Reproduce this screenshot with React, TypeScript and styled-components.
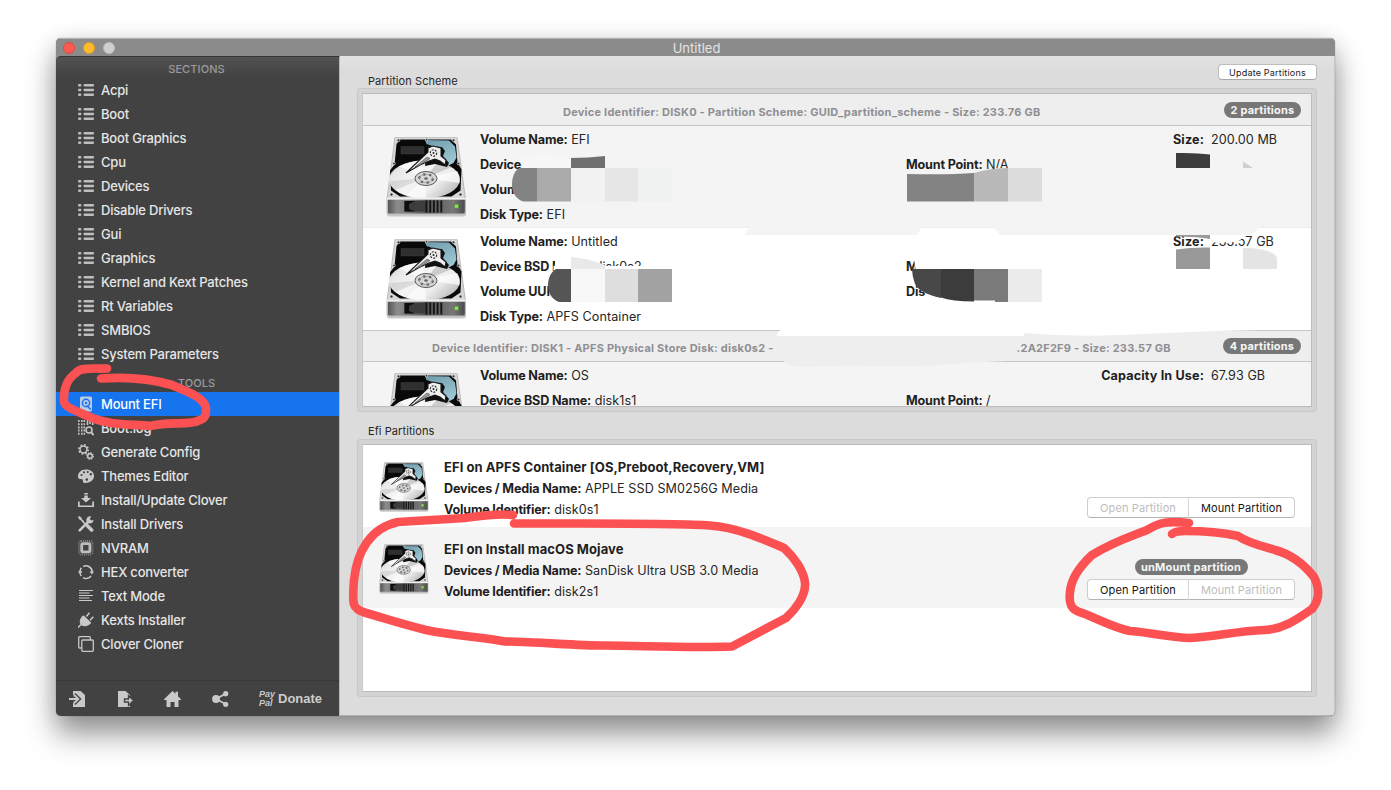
import React from "react";
import styled, { createGlobalStyle } from "styled-components";

const GlobalStyle = createGlobalStyle`
  * { box-sizing: border-box; }
  body { margin: 0; background: #fff; font-family: Inter, "Liberation Sans", sans-serif; overflow: hidden; }
  svg { display: block; }
`;

const Desktop = styled.div`
  position: relative;
  width: 1391px;
  height: 790px;
  padding: 38px 56px 0;
  background: #fff;
`;

const Window = styled.div`
  width: 1279px;
  height: 678px;
  border-radius: 5px;
  overflow: hidden;
  display: flex;
  flex-direction: column;
  background: #8b8b8b;
  box-shadow: 0 0 1px rgba(0, 0, 0, 0.5), 0 18px 30px rgba(0, 0, 0, 0.42), 0 2px 22px rgba(0, 0, 0, 0.1);
`;

const TitleBar = styled.div`
  height: 18px;
  flex: none;
  display: grid;
  grid-template-columns: 1fr auto 1fr;
  align-items: center;
  background: #8b8b8b;
  border-top: 1px solid #b4b4b4;
`;

const Lights = styled.div`
  display: flex;
  gap: 8px;
  padding-left: 7px;
`;

const Light = styled.span<{ $fill: string; $edge: string }>`
  width: 12px;
  height: 12px;
  border-radius: 50%;
  background: ${(p) => p.$fill};
  border: 1px solid ${(p) => p.$edge};
`;

const Title = styled.div`
  padding-left: 2px;
  font-size: 13px;
  line-height: 18px;
  letter-spacing: 0;
  color: #e4e4e4;
`;

const Body = styled.div`
  flex: 1;
  display: flex;
  min-height: 0;
`;

const Sidebar = styled.aside`
  width: 284px;
  flex: none;
  display: flex;
  flex-direction: column;
  background: linear-gradient(#525252, #424242 20px);
  border-top: 1px solid #343434;
  border-right: 1px solid #b9b9bd;
  border-top-left-radius: 5px;
`;

const SectionTitle = styled.div<{ $height: number; $top: number }>`
  height: ${(p) => p.$height}px;
  padding-top: ${(p) => p.$top}px;
  padding-right: 2px;
  text-align: center;
  font-size: 11px;
  line-height: 14px;
  font-weight: 500;
  letter-spacing: 0.1px;
  color: #9b9b9b;
`;

const NavItem = styled.div<{ $active?: boolean }>`
  height: 24px;
  display: flex;
  align-items: center;
  gap: 7px;
  padding-left: 22px;
  font-size: 13px;
  line-height: 17px;
  font-weight: 500;
  letter-spacing: -0.19px;
  white-space: nowrap;
  color: ${(p) => (p.$active ? "#fff" : "#e6e6e6")};
  background: ${(p) => (p.$active ? "#1674ee" : "transparent")};
`;

const Footer = styled.div`
  margin-top: auto;
  height: 36px;
  display: flex;
  align-items: center;
  padding: 1px 0 0 13px;
  border-top: 1px solid #383838;
`;

const FooterCell = styled.div<{ $width: number }>`
  width: ${(p) => p.$width}px;
  flex: none;
`;

const PayPal = styled.div`
  width: 19px;
  font: italic bold 9px/9px "Liberation Sans", sans-serif;
  color: #c8c8c8;
`;

const Donate = styled.div`
  font: bold 13px/16px "Liberation Sans", sans-serif;
  color: #cdcdcd;
`;

const Main = styled.main`
  flex: 1;
  display: flex;
  flex-direction: column;
  padding: 0 18px 0 17px;
  background: linear-gradient(#e3e3e3, #dcdcdc 14px);
  border-right: 1px solid #c6c6c6;
  border-bottom: 1px solid #b2b2b2;
`;

const GroupHeader = styled.div<{ $height: number }>`
  height: ${(p) => p.$height}px;
  flex: none;
  display: flex;
  justify-content: space-between;
  align-items: flex-end;
  padding-left: 11px;
  margin-right: -1px;
`;

const GroupLabel = styled.div<{ $drop?: number }>`
  font-size: 11px;
  line-height: 15px;
  margin-bottom: ${(p) => -(p.$drop ?? 0)}px;
  letter-spacing: 0.08px;
  color: #262626;
`;

const SmallButton = styled.button`
  width: 99px;
  height: 16px;
  margin: 0 0 8px;
  padding: 0;
  border: 1px solid #bdbdbd;
  border-bottom-color: #a8a8a8;
  border-radius: 4px;
  background: #fff;
  font: 9px/13px Inter, "Liberation Sans", sans-serif;
  letter-spacing: 0.2px;
  color: #202020;
`;

const GroupBox = styled.section<{ $height: number }>`
  height: ${(p) => p.$height}px;
  flex: none;
  margin-right: -1px;
  padding: 4px;
  border: 1px solid #c8c8c8;
  border-radius: 3px;
  background: #d3d3d3;
`;

const List = styled.div`
  height: 100%;
  overflow: hidden;
  border: 1px solid #bcbcbc;
  border-left-color: #c8c8c8;
  background: #fff;
`;

const DiskHeader = styled.div<{ $first?: boolean }>`
  height: ${(p) => (p.$first ? 32 : 31)}px;
  display: grid;
  grid-template-columns: 1fr ${(p) => (p.$first ? 87 : 88)}px;
  background: #eee;
  border-bottom: 1px solid #c6c6c6;
`;

const DiskTitle = styled.div<{ $left: number; $top: number }>`
  padding: ${(p) => p.$top}px 0 0 ${(p) => p.$left}px;
  display: flex;
  font-size: 11px;
  line-height: 15px;
  font-weight: 700;
  letter-spacing: 0.23px;
  white-space: pre;
  color: #8f8f93;
`;

const Elided = styled.span<{ $width: number }>`
  width: ${(p) => p.$width}px;
`;

const Badge = styled.div<{ $width: number; $top?: number }>`
  width: ${(p) => p.$width}px;
  height: 16px;
  margin-top: ${(p) => p.$top ?? 0}px;
  border-radius: 8px;
  background: #777;
  color: #f6f6f6;
  text-align: center;
  font-size: 11px;
  line-height: 16px;
  font-weight: 700;
  letter-spacing: 0.2px;
  white-space: nowrap;
`;

const Volume = styled.div<{ $tint?: boolean; $rule: string; $height?: number }>`
  height: ${(p) => p.$height ?? 102}px;
  display: grid;
  grid-template-columns: 117px 426px 194px 104px 1fr;
  background: ${(p) => (p.$tint ? "#f4f4f4" : "#fff")};
  border-bottom: 1px solid ${(p) => p.$rule};
`;

const DiskSlot = styled.div<{ $left: number; $top: number }>`
  padding: ${(p) => p.$top}px 0 0 ${(p) => p.$left}px;
`;

const Line = styled.div<{ $height?: number; $heading?: boolean }>`
  font-size: ${(p) => (p.$heading ? 13 : 12.6)}px;
  line-height: ${(p) => p.$height ?? 25}px;
  height: ${(p) => p.$height ?? 25}px;
  letter-spacing: 0.06px;
  white-space: pre;
  color: #262626;

  b {
    font-weight: 700;
    letter-spacing: ${(p) => (p.$heading ? 0.06 : -0.18)}px;
    color: #1f1f1f;
  }
`;

const Lines = styled.div<{ $skip?: number; $right?: boolean; $gap?: number }>`
  padding-top: ${(p) => 1 + 25 * (p.$skip ?? 0)}px;
  padding-left: ${(p) => p.$gap ?? 0}px;
  text-align: ${(p) => (p.$right ? "right" : "left")};
  ${(p) => p.$right && "b { letter-spacing: 0.14px !important; }"}
`;

const EfiRow = styled.div<{ $tint?: boolean }>`
  height: ${(p) => (p.$tint ? 81 : 82)}px;
  display: grid;
  grid-template-columns: 81px 1fr 208px;
  padding-right: 16px;
  background: ${(p) => (p.$tint ? "#f4f4f4" : "#fff")};
`;

const EfiInfo = styled.div`
  padding-top: 12px;
`;

const Actions = styled.div`
  display: flex;
  flex-direction: column;
  align-items: center;
  justify-content: flex-end;
  gap: 4px;
  height: 73px;
`;

const Segmented = styled.div`
  width: 208px;
  height: 21px;
  display: grid;
  grid-template-columns: 100px 1fr;
  border: 1px solid #cdcdcd;
  border-bottom-color: #b4b4b4;
  border-radius: 4px;
  background: #fff;
`;

const Segment = styled.div<{ $disabled?: boolean }>`
  text-align: center;
  font-size: 11px;
  line-height: 20px;
  letter-spacing: 0.12px;
  color: ${(p) => (p.$disabled ? "#bdbdbd" : "#141414")};
  & + & { border-left: 1px solid #d6d6d6; }
`;

const Overlay = styled.svg`
  position: absolute;
  inset: 0;
  pointer-events: none;
`;

const C = "#c9c9c9";

const ListIcon = () => (
  <svg width="16" height="12" viewBox="0 0 16 12" fill="#bebebe">
    {[0, 4.7, 9.4].map((y) => (
      <g key={y}>
        <rect x="0" y={y} width="3.4" height="2.5" rx="1.1" />
        <rect x="5.6" y={y} width="10.4" height="2.5" rx="0.8" />
      </g>
    ))}
  </svg>
);

const toolIcons: Record<string, React.ReactNode> = {
  mount: (
    <>
      <rect x="2" y="0.6" width="12" height="15" rx="1.6" fill="#bccbe2" />
      <circle cx="8" cy="7" r="4.4" fill="#1674ee" />
      <circle cx="8" cy="7" r="2.9" fill="#bccbe2" />
      <circle cx="8" cy="7" r="1.2" fill="#1674ee" />
      <path d="M8.8 9.4l4 4.2" stroke="#1674ee" strokeWidth="1.5" />
    </>
  ),
  log: (
    <>
      <g stroke={C} strokeWidth="1.5">
        <path d="M.8 0v15.5M3.8 0v15.5M6.3 0v15.5" strokeDasharray="2 1.2" />
        <path d="M9.5 0v5M12 0v4M14.7 0v5" />
      </g>
      <circle cx="11" cy="10" r="3" fill="none" stroke={C} strokeWidth="1.5" />
      <path d="M13.2 12.3l2.5 2.8" stroke={C} strokeWidth="1.8" />
    </>
  ),
  gears: (
    <g fill="none" stroke={C}>
      <circle cx="5.5" cy="5.4" r="3.5" strokeWidth="1.5" />
      <circle cx="5.5" cy="5.4" r="4.7" strokeWidth="1.5" strokeDasharray="1.7 1.99" />
      <circle cx="12" cy="12" r="2.3" strokeWidth="1.4" />
      <circle cx="12" cy="12" r="3.3" strokeWidth="1.2" strokeDasharray="1.3 1.29" />
    </g>
  ),
  palette: (
    <>
      <path
        d="M8 1.6C3.4 1.6 0 4.500 0 8.200c0 2 1 3 2.600 2.900 1.800-.2 2.600.6 2.300 2 -.2 1.200.5 1.900 2.200 1.900 5 0 8.900-3 8.900-7 0-3.700-3.500-6.400-8-6.400z"
        fill={C}
      />
      <g fill="#424242">
        <circle cx="3.500" cy="7" r="1.100" />
        <circle cx="6" cy="4.300" r="1.100" />
        <circle cx="9.700" cy="4" r="1.100" />
        <circle cx="12.800" cy="6.300" r="1.200" />
        <circle cx="8.800" cy="11.600" r="1.300" />
      </g>
    </>
  ),
  install: (
    <g fill={C}>
      <path d="M6.300 1h3.500v1.500H6.300zM6.300 3.500h3.500V6h3.300L8 10.600 3 6h3.300z" />
      <path d="M0 9.500h1.700v4h12.600v-4H16V15H0z" />
    </g>
  ),
  tools: (
    <>
      <path d="M1 1.500l4.800 4.700M9.500 10l4.600 4.300" stroke={C} strokeWidth="1.700" />
      <path d="M9.600 10l4 4" stroke={C} strokeWidth="3.600" strokeLinecap="round" />
      <path d="M5 6L9.800 10.400" stroke={C} strokeWidth="1.400" />
      <path d="M1.700 14.300L11 5" stroke={C} strokeWidth="2.600" strokeLinecap="round" />
      <path d="M13.200.6a3.600 3.600 0 1 0 2.300 3.200l-2.100.8-1.700-1.600z" fill={C} />
      <path d="M0 .9L1 0l2.400 1.500.3 1.300-1 .9-1.200-.3z" fill={C} />
    </>
  ),
  chip: (
    <>
      <rect x="1" y="1" width="13.500" height="13.500" rx="2" fill="none" stroke="#7d7d7d" strokeWidth="1.800" strokeDasharray="1.100 .9" />
      <rect x="3.700" y="3.700" width="8.200" height="8.200" rx="1" fill="none" stroke="#bdbdbd" strokeWidth="2.800" />
    </>
  ),
  cycle: (
    <>
      <g fill="none" stroke={C} strokeWidth="1.500">
        <path d="M5.200 2.500A6.200 6.200 0 0 1 14.200 8" />
        <path d="M2 7.500a6.200 6.200 0 0 0 1.300 4.500M5 13.600a6.200 6.200 0 0 0 8-1.600M2 7.800a6 6 0 0 1 1.400-4" />
      </g>
      <path d="M11.500 7.500H16l-2.200 3zM0 8.700h4.500L2.200 5.600z" fill={C} />
    </>
  ),
  text: (
    <path d="M1 2.500h14M1 5h10.500M1 7.500h14M1 10h10.500M1 12.500h13" stroke={C} strokeWidth="1.050" />
  ),
  plug: (
    <>
      <path d="M0 15.500l3-3M8.300 4.600L11.500.8M12 8.300l3.400-3.500" stroke={C} strokeWidth="1.500" fill="none" />
      <path d="M5.500 3.200l7.800 7.600c-2.300 3.300-7 4.400-10 2.400C.3 10.500 1.900 5.500 5.500 3.200z" fill={C} />
    </>
  ),
  clone: (
    <g fill="none" stroke={C} strokeWidth="1.300">
      <rect x="3.800" y="4" width="11.500" height="11.300" rx="1" />
      <path d="M3.500 12H1.700a1 1 0 0 1-1-1V1.700a1 1 0 0 1 1-1h9.600a1 1 0 0 1 1 1v2" />
    </g>
  ),
};

const ToolIcon = ({ name }: { name: string }) => (
  <svg width="16" height="16" viewBox="0 0 16 16">{toolIcons[name]}</svg>
);

const HardDisk = ({ width, height }: { width: number; height: number }) => (
  <svg width={width} height={height} viewBox="0 0 81 80" preserveAspectRatio="none">
    <defs>
      <linearGradient id="front" x1="0" x2="1">
        <stop offset="0" stopColor="#555" />
        <stop offset="0.12" stopColor="#8d8d8d" />
        <stop offset="0.5" stopColor="#555" />
        <stop offset="0.85" stopColor="#777" />
        <stop offset="1" stopColor="#4c4c4c" />
      </linearGradient>
      <linearGradient id="platter" x1="0" y1="0" x2="1" y2="0.6">
        <stop offset="0" stopColor="#8a8a8a" />
        <stop offset="0.2" stopColor="#e6e6e6" />
        <stop offset="0.5" stopColor="#f4f4f4" />
        <stop offset="0.75" stopColor="#eeeeee" />
        <stop offset="1" stopColor="#c4c4c4" />
      </linearGradient>
      <linearGradient id="glass" x1="0" y1="0" x2="0.6" y2="1">
        <stop offset="0" stopColor="#6f9aab" />
        <stop offset="1" stopColor="#9cc6d4" />
      </linearGradient>
    </defs>
    <path d="M1 75.500h79v2.500q-1 1.500-3 1.500H4q-2.500 0-3-1.500z" fill="#c9c9c9" />
    <path d="M8.500.3h63L80 62v14q0 1.500-2 1.500H2.500Q.5 77.500.5 76V62z" fill="#b9b9b9" />
    <path d="M9.300 1h61.400l8 59.500H1.700z" fill="#d6d6d6" />
    <path d="M14 2.500h51l5 5 1.500 18 4 7-1 21-9 6H14l-9-6-1-20 4.500-6L10.500 7z" fill="#090909" />
    <path d="M39 3l24 .5 6 6 1.500 11-3 5.500-6 3-7-7-5-12-9-3z" fill="url(#glass)" />
    <ellipse cx="38.500" cy="42.500" rx="35.500" ry="19" fill="url(#platter)" />
    <path d="M39 41L13 29.500Q23 24 36 23.500zM39 41L71 34q3 4 2.500 12z" fill="#fff" opacity=".7" />
    <path d="M39 41L52 25q8 1 14 5z" fill="#777" opacity=".3" />
    <path d="M39 41L9 53Q5 49 4 44z" fill="#8c8c8c" opacity=".22" />
    <path d="M39 41L20 59q10 2.500 20 2.200z" fill="#fff" opacity=".6" />
    <path d="M41 9l15 1 3 4-2 5 6 7-2 4-12-3-10 2z" fill="#101010" />
    <path d="M20 36l22-21 0-4 5-2 8 2v8l5 4-1 5-5-4-5-2-6 2-9 4z" fill="#efefef" stroke="#181818" strokeWidth="1.100" />
    <path d="M29 30l12-10 3 1.500L34 28z" fill="#999" stroke="#333" strokeWidth=".5" />
    <circle cx="47.500" cy="16" r="3.200" fill="#f1f1f1" stroke="#222" strokeWidth="1.100" strokeDasharray="2 1.200" />
    <circle cx="47.500" cy="16" r="1" fill="#222" />
    <rect x="15" y="9.500" width="23" height="7.500" fill="#2f2f2f" stroke="#444" strokeWidth=".4" />
    <ellipse cx="40" cy="41.500" rx="11" ry="7" fill="#d6d6d6" stroke="#4a4a4a" strokeWidth=".9" />
    <ellipse cx="40" cy="41.500" rx="6.800" ry="4.200" fill="none" stroke="#4f4f4f" strokeWidth="2.200" strokeDasharray="2.200 3.600" />
    <ellipse cx="40" cy="41.500" rx="6.800" ry="4.200" fill="none" stroke="#8a8a8a" strokeWidth=".6" />
    <ellipse cx="40" cy="41.500" rx="1.800" ry="1.200" fill="#666" />
    <g fill="#2c2c2c" stroke="#e2e2e2" strokeWidth=".7">
      <circle cx="12.500" cy="3.300" r="1.400" />
      <circle cx="40.500" cy="2.800" r="1.200" />
      <circle cx="67.500" cy="3.300" r="1.400" />
      <circle cx="8" cy="26.500" r="1.300" />
      <circle cx="72.500" cy="26.500" r="1.300" />
      <circle cx="5.500" cy="57.500" r="1.500" />
      <circle cx="74.500" cy="57.500" r="1.500" />
    </g>
    <path d="M1.200 60.500h78.300l.3 2.300H.9z" fill="#f0f0f0" />
    <path d="M2 62.800h76.800V75q0 1.500-2 1.500H4Q2 76.500 2 75z" fill="url(#front)" />
    <path d="M18.500 64H40v10.500H18.500z" fill="#3d3d3d" />
    <path d="M18.500 64H29l-6 3v5l6 2.500H18.500z" fill="#0e0e0e" />
    <path d="M40.500 63.500v12M44.200 63.500v12M47.900 63.500v12M51.600 63.500v12M55.300 63.500v12" stroke="#151515" strokeWidth="1.900" />
    <rect x="68.500" y="67.200" width="4" height="4" rx=".6" fill="#8fe850" stroke="#4c7f3a" strokeWidth=".6" />
  </svg>
);

const sections = [
  "Acpi", "Boot", "Boot Graphics", "Cpu", "Devices", "Disable Drivers", "Gui", "Graphics",
  "Kernel and Kext Patches", "Rt Variables", "SMBIOS", "System Parameters",
];

const tools: [string, string][] = [
  ["mount", "Mount EFI"],
  ["log", "Boot.log"],
  ["gears", "Generate Config"],
  ["palette", "Themes Editor"],
  ["install", "Install/Update Clover"],
  ["tools", "Install Drivers"],
  ["chip", "NVRAM"],
  ["cycle", "HEX converter"],
  ["text", "Text Mode"],
  ["plug", "Kexts Installer"],
  ["clone", "Clover Cloner"],
];

const Field = ({ label, value, height, heading }: { label: string; value?: string; height?: number; heading?: boolean }) => (
  <Line $height={height} $heading={heading}>
    <b>{label}</b>
    {value ? " " + value : ""}
  </Line>
);

const Redactions = () => (
  <g>
    {/* EFI volume */}
    <path d="M522 158q25-6 49 0v10h-49z" fill="#f7f7f7" />
    <path d="M514 181h60v18h-60z" fill="#f4f4f4" />
    <path d="M571 158q17 0 34-2v12h-34z" fill="#707070" />
    <path d="M519 168h18v33.500h-14c-8-3-11-10-11-17 0-7 2-13 7-16.500z" fill="#838383" />
    <path d="M537 168h34v33.500h-34z" fill="#aaa" />
    <path d="M571 168h34v33.500h-34z" fill="#f2f2f2" />
    <path d="M605 168h33v33.500h-33z" fill="#e6e6e6" />
    <path d="M638 168h34v33.500h-34z" fill="#f0f1f1" />
    <path d="M995 168h13v6h-13z" fill="#f4f4f4" />
    <path d="M907 174q40 1 67-1v28.500h-67z" fill="#838383" />
    <path d="M974 173q17-5 34-5v33.500h-34z" fill="#b9b9b9" />
    <path d="M1008 168h34v33.500h-34z" fill="#dcdcdc" />
    <path d="M1176 153q20-.5 34 1.500v13.500h-34z" fill="#3c3c3c" />
    <path d="M1243 161.500l10 6.500h-10z" fill="#cfcfcf" />
    {/* APFS container volume */}
    <path d="M750 226.500h172l-5 8.500H744zM993 226.500h267l-8 8.500H1000z" fill="#f4f4f4" />
    <path d="M555 258h43v11h-43zM598 266h76v3h-76z" fill="#fff" />
    <path d="M553.500 266h8v6h-8z" fill="#fff" />
    <path d="M571 257q17 1 34 8v4h-34z" fill="#e9e9e9" />
    <path d="M556 269h15v33h-12c-8-3-11-10-11-17 0-7 3-13 8-16z" fill="#555" />
    <path d="M571 269h34v33h-34z" fill="#f8f8f8" />
    <path d="M605 269h33v33h-33z" fill="#dedede" />
    <path d="M638 269h34v33h-34z" fill="#a3a3a3" />
    <path d="M616 309h4v3.500h-4z" fill="#fff" />
    <path d="M914 259h8v13h-6z" fill="#fff" />
    <path d="M912 269h29v29q-22-5-26-14-3-8-3-15z" fill="#484848" />
    <path d="M941 269h33v32.500q-22 0-33-4z" fill="#3c3c3c" />
    <path d="M974 269h34v33h-13v-1.500h-21z" fill="#7a7a7a" />
    <path d="M1008 269h34v33h-34z" fill="#ececec" />
    <path d="M1210 235h36l-3 3-6 4-27 .5z" fill="#fff" />
    <path d="M1176 235h34v4q-12-2.500-34-2.500z" fill="#999" />
    <path d="M1176 249.500q17-2.500 34-2v21.500h-34z" fill="#999" />
    <path d="M1243 248q30 0 34 10v11h-34z" fill="#e4e4e4" />
    {/* container header */}
    <path d="M780 330h480l-60 1.500-80 3.500q-50 2-96-2v3H776z" fill="#fff" />
    <path d="M783 361h223l-40 2q-50 4-80 3-60-1-82 1-16-1-21-6z" fill="#eee" />
  </g>
);

const Strokes = () => (
  <g fill="none" stroke="#fc5152" strokeWidth="8.600" strokeLinecap="round" strokeLinejoin="round">
    <path d="M107 368.500C92 369 80 367 76 373C67 379 63.500 388 64 401C64 408 80 412 90 417C108 425 128 424 150 426C170 421 190 426 200 420C207 417 206 413 206 408C204 397 188 392 172 385C148 378 122 377 101 378.500" />
    <path d="M513 515C495 513 480 516 465 518L398 522C370 528 357 552 354 580C352 605 352 609 366 613C390 620 405 625 426 630C455 636 482 637 505 641.500C540 642 575 645.500 605 645.500C650 646 690 648 732 646.500L786 618C795 610 806 596 805 583C804 571 794 557 784 548C765 540 740 528 710 525.500C680 523 600 523.500 545 523.500L514 523.500" />
    <path d="M1189 523C1168 521 1160 522 1147 530C1130 537 1115 541 1092 555C1078 568 1071 580 1070 592C1068 609 1075 611 1085 614C1100 620 1115 628 1130 631C1155 633 1170 637.500 1190 638C1215 637 1235 631 1265 630C1285 629 1300 617 1312 609C1321 598 1319 587 1314 577C1303 563 1290 554 1275 550C1262 546 1248 543 1238 536C1220 532 1200 531 1185 531C1178 531 1174 532 1172 534" />
  </g>
);

export default function App() {
  return (
    <>
      <GlobalStyle />
      <Desktop>
        <Window>
          <TitleBar>
            <Lights>
              <Light $fill="#fc5b54" $edge="#e2473f" />
              <Light $fill="#fdbc2e" $edge="#e0a125" />
              <Light $fill="#cfcfcf" $edge="#bdbdbd" />
            </Lights>
            <Title>Untitled</Title>
          </TitleBar>
          <Body>
            <Sidebar>
              <SectionTitle $height={21} $top={5}>SECTIONS</SectionTitle>
              {sections.map((s) => (
                <NavItem key={s}>
                  <ListIcon />
                  {s}
                </NavItem>
              ))}
              <SectionTitle $height={26} $top={10}>TOOLS</SectionTitle>
              {tools.map(([icon, label]) => (
                <NavItem key={label} $active={icon === "mount"}>
                  <ToolIcon name={icon} />
                  {label}
                </NavItem>
              ))}
              <Footer>
                <FooterCell $width={48}>
                  <svg width="16" height="16" viewBox="0 0 16 16">
                    <path d="M4 0h7.500L16 4v12H4z" fill={C} />
                    <path d="M0 8h8M5 3.300L9.700 8 5 12.700" fill="none" stroke="#424242" strokeWidth="4" />
                    <path d="M0 8h8M5 3.800L9.300 8 5 12.200" fill="none" stroke={C} strokeWidth="1.900" />
                  </svg>
                </FooterCell>
                <FooterCell $width={47}>
                  <svg width="17" height="16" viewBox="0 0 17 16">
                    <path d="M1 0h7.500L13 4v12H1z" fill={C} />
                    <path d="M7.500 8h4V4.500l5 5-5 5V11h-4z" fill={C} stroke="#424242" strokeWidth="1.300" />
                  </svg>
                </FooterCell>
                <FooterCell $width={48}>
                  <svg width="17" height="16" viewBox="0 0 17 16">
                    <path d="M8.500 0l3 2.800V.8H14v4.400L17 8.300v.7h-2.500v7h-4v-5h-4v5h-4V9H0v-.700z" fill={C} />
                  </svg>
                </FooterCell>
                <FooterCell $width={47}>
                  <svg width="17" height="16" viewBox="0 0 17 16">
                    <path d="M13.500 2.800L4 8l9.500 5" stroke={C} strokeWidth="1.800" fill="none" />
                    <circle cx="4" cy="8" r="3.900" fill={C} />
                    <circle cx="13.700" cy="2.700" r="2.600" fill={C} />
                    <circle cx="13.700" cy="13.300" r="2.600" fill={C} />
                  </svg>
                </FooterCell>
                <PayPal>
                  Pay
                  <br />
                  Pal
                </PayPal>
                <Donate>Donate</Donate>
              </Footer>
            </Sidebar>
            <Main>
              <GroupHeader $height={32}>
                <GroupLabel $drop={1}>Partition Scheme</GroupLabel>
                <SmallButton>Update Partitions</SmallButton>
              </GroupHeader>
              <GroupBox $height={324}>
                <List>
                  <DiskHeader $first>
                    <DiskTitle $left={200} $top={11}>
                      Device Identifier: DISK0 - Partition Scheme: GUID_partition_scheme - Size: 233.76 GB
                    </DiskTitle>
                    <Badge $width={77} $top={8}>2 partitions</Badge>
                  </DiskHeader>
                  <Volume $tint $rule="#ececec">
                    <DiskSlot $left={23} $top={11}><HardDisk width={81} height={80} /></DiskSlot>
                    <Lines>
                      <Field label="Volume Name:" value="EFI" />
                      <Field label="Device" />
                      <Field label="Volum" />
                      <Field label="Disk Type:" value="EFI" />
                    </Lines>
                    <Lines $skip={1}><Field label="Mount Point:" value="N/A" /></Lines>
                    <Lines $right><Field label="Size:" /></Lines>
                    <Lines $gap={7}><Line>200.00 MB</Line></Lines>
                  </Volume>
                  <Volume $rule="#c6c6c6" $height={103}>
                    <DiskSlot $left={23} $top={11}><HardDisk width={81} height={80} /></DiskSlot>
                    <Lines>
                      <Field label="Volume Name:" value="Untitled" />
                      <Field label="Device BSD Name:" value="disk0s2" />
                      <Field label="Volume UUI" />
                      <Field label="Disk Type:" value="APFS Container" />
                    </Lines>
                    <Lines $skip={1}>
                      <Field label="M" />
                      <Field label="Dis" />
                    </Lines>
                    <Lines $right><Field label="Size:" /></Lines>
                    <Lines $gap={7}><Line>233.57 GB</Line></Lines>
                  </Volume>
                  <DiskHeader>
                    <DiskTitle $left={69} $top={10}>
                      Device Identifier: DISK1 - APFS Physical Store Disk: disk0s2 -
                      <Elided $width={243} />
                      .2A2F2F9 - Size: 233.57 GB
                    </DiskTitle>
                    <Badge $width={78} $top={7}>4 partitions</Badge>
                  </DiskHeader>
                  <Volume $tint $rule="#ececec">
                    <DiskSlot $left={23} $top={11}><HardDisk width={81} height={80} /></DiskSlot>
                    <Lines>
                      <Field label="Volume Name:" value="OS" />
                      <Field label="Device BSD Name:" value="disk1s1" />
                    </Lines>
                    <Lines $skip={1}><Field label="Mount Point:" value="/" /></Lines>
                    <Lines $right><Field label="Capacity In Use:" /></Lines>
                    <Lines $gap={7}><Line>67.93 GB</Line></Lines>
                  </Volume>
                </List>
              </GroupBox>
              <GroupHeader $height={27}>
                <GroupLabel>Efi Partitions</GroupLabel>
              </GroupHeader>
              <GroupBox $height={258}>
                <List>
                  <EfiRow>
                    <DiskSlot $left={16} $top={17}><HardDisk width={50} height={50} /></DiskSlot>
                    <EfiInfo>
                      <Field heading height={21} label="EFI on APFS Container [OS,Preboot,Recovery,VM]" />
                      <Field height={21} label="Devices / Media Name:" value="APPLE SSD SM0256G Media" />
                      <Field height={21} label="Volume Identifier:" value="disk0s1" />
                    </EfiInfo>
                    <Actions>
                      <Segmented>
                        <Segment $disabled>Open Partition</Segment>
                        <Segment>Mount Partition</Segment>
                      </Segmented>
                    </Actions>
                  </EfiRow>
                  <EfiRow $tint>
                    <DiskSlot $left={16} $top={17}><HardDisk width={50} height={50} /></DiskSlot>
                    <EfiInfo>
                      <Field heading height={21} label="EFI on Install macOS Mojave" />
                      <Field height={21} label="Devices / Media Name:" value="SanDisk Ultra USB 3.0 Media" />
                      <Field height={21} label="Volume Identifier:" value="disk2s1" />
                    </EfiInfo>
                    <Actions>
                      <Badge $width={113}>unMount partition</Badge>
                      <Segmented>
                        <Segment>Open Partition</Segment>
                        <Segment $disabled>Mount Partition</Segment>
                      </Segmented>
                    </Actions>
                  </EfiRow>
                </List>
              </GroupBox>
            </Main>
          </Body>
        </Window>
        <Overlay width="1391" height="790" viewBox="0 0 1391 790">
          <Redactions />
          <Strokes />
        </Overlay>
      </Desktop>
    </>
  );
}
